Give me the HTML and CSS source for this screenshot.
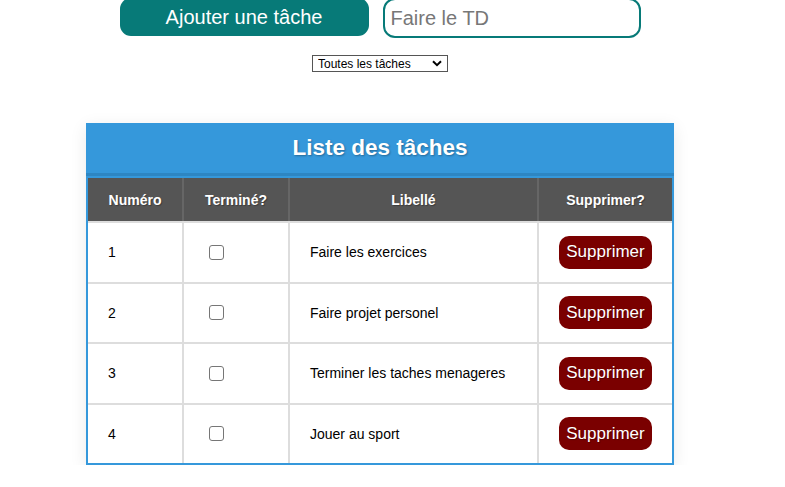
FILE: index.html
```html
<!DOCTYPE html>
<html lang="fr">
<head>
<meta charset="utf-8">
<title>Liste des tâches</title>
<link rel="stylesheet" href="styles.css">
</head>
<body>
<div class="page">
  <div class="add-bar">
    <button class="add-btn">Ajouter une tâche</button>
    <input class="task-input" type="text" placeholder="Faire le TD">
  </div>
  <div class="filter">
    <select class="filter-select">
      <option>Toutes les tâches</option>
    </select>
    <svg class="chevron" width="10" height="7" viewBox="0 0 10 7" aria-hidden="true">
      <path d="M1 1.2 L5 5.2 L9 1.2" fill="none" stroke="#000" stroke-width="2"/>
    </svg>
  </div>
  <div class="card">
    <h1 class="card-title">Liste des tâches</h1>
    <table class="tasks">
      <thead>
        <tr>
          <th class="c-num">Numéro</th>
          <th class="c-done">Terminé?</th>
          <th class="c-label">Libellé</th>
          <th class="c-del">Supprimer?</th>
        </tr>
      </thead>
      <tbody>
        <tr>
          <td class="num">1</td>
          <td class="done"><span class="check"></span></td>
          <td class="label">Faire les exercices</td>
          <td class="del"><button class="del-btn">Supprimer</button></td>
        </tr>
        <tr>
          <td class="num">2</td>
          <td class="done"><span class="check"></span></td>
          <td class="label">Faire projet personel</td>
          <td class="del"><button class="del-btn">Supprimer</button></td>
        </tr>
        <tr>
          <td class="num">3</td>
          <td class="done"><span class="check"></span></td>
          <td class="label">Terminer les taches menageres</td>
          <td class="del"><button class="del-btn">Supprimer</button></td>
        </tr>
        <tr>
          <td class="num">4</td>
          <td class="done"><span class="check"></span></td>
          <td class="label">Jouer au sport</td>
          <td class="del"><button class="del-btn">Supprimer</button></td>
        </tr>
      </tbody>
    </table>
  </div>
</div>
</body>
</html>
```

FILE: styles.css
```css
html, body {
  margin: 0;
  padding: 0;
  background: #ffffff;
  font-family: "Liberation Sans", Arial, sans-serif;
}

.page {
  width: 760px;
  display: flex;
  flex-direction: column;
  align-items: center;
  margin-top: -2px;
}

.add-bar {
  display: flex;
  gap: 14px;
  align-items: flex-start;
}

.add-btn {
  width: 249px;
  height: 38px;
  background: #077a78;
  color: #ffffff;
  border: none;
  border-radius: 11px;
  font-family: "Liberation Sans", Arial, sans-serif;
  font-size: 20px;
  padding: 0;
}

.task-input {
  box-sizing: border-box;
  width: 258px;
  height: 40px;
  border: 2px solid #077a78;
  border-radius: 12px;
  padding: 0 6px;
  font-family: "Liberation Sans", Arial, sans-serif;
  font-size: 20px;
  outline: none;
}

.task-input::placeholder {
  color: #777777;
}

.filter {
  margin-top: 17px;
  position: relative;
  height: 17px;
}

.filter-select {
  -webkit-appearance: none;
  appearance: none;
  box-sizing: border-box;
  width: 136px;
  height: 17px;
  font-family: "Liberation Sans", Arial, sans-serif;
  font-size: 12px;
  color: #000;
  border: 1px solid #555;
  border-radius: 0;
  background: #fff;
  padding: 0 0 0 5px;
  margin: 0;
  display: block;
}

.chevron {
  position: absolute;
  right: 6px;
  top: 5px;
  pointer-events: none;
}

.card {
  margin-top: 51px;
  width: 588px;
  box-shadow: 0 4px 16px rgba(0, 0, 0, 0.09);
}

.card-title {
  margin: 0;
  height: 50px;
  line-height: 50px;
  background: #3598db;
  border-bottom: 3px solid #2d86c3;
  color: #ffffff;
  text-align: center;
  font-size: 22.5px;
  font-weight: bold;
  text-shadow: 1px 1px 2px rgba(0, 0, 0, 0.3);
}

.tasks {
  width: 100%;
  table-layout: fixed;
  border-collapse: separate;
  border-spacing: 0;
  border: 2px solid #3598db;
  font-size: 14px;
}

.tasks th {
  box-sizing: border-box;
  background: #555555;
  color: #ffffff;
  font-weight: bold;
  height: 43px;
  padding: 0;
  border-right: 2px solid #666666;
  text-shadow: 1px 1px 1px rgba(0, 0, 0, 0.3);
}

.tasks th:last-child {
  border-right: none;
}

.c-num { width: 96px; }
.c-done { width: 106px; }
.c-label { width: 249px; }

.tasks td {
  box-sizing: border-box;
  height: 60.5px;
  border-top: 2px solid #dddddd;
  border-right: 2px solid #dddddd;
  padding: 0 20px;
  color: #000;
}

.tasks td:last-child {
  border-right: none;
}

.tasks td.done {
  padding-left: 25px;
}

.check {
  display: block;
  width: 13px;
  height: 13px;
  border: 1px solid #767676;
  border-radius: 3px;
  background: #fff;
}

.tasks td.del {
  text-align: center;
  padding: 0;
}

.del-btn {
  background: #7a0000;
  color: #ffffff;
  border: none;
  border-radius: 10px;
  font-family: "Liberation Sans", Arial, sans-serif;
  font-size: 17px;
  height: 33px;
  padding: 0 7px;
  text-shadow: 1px 1px 1px rgba(0, 0, 0, 0.3);
}
```
